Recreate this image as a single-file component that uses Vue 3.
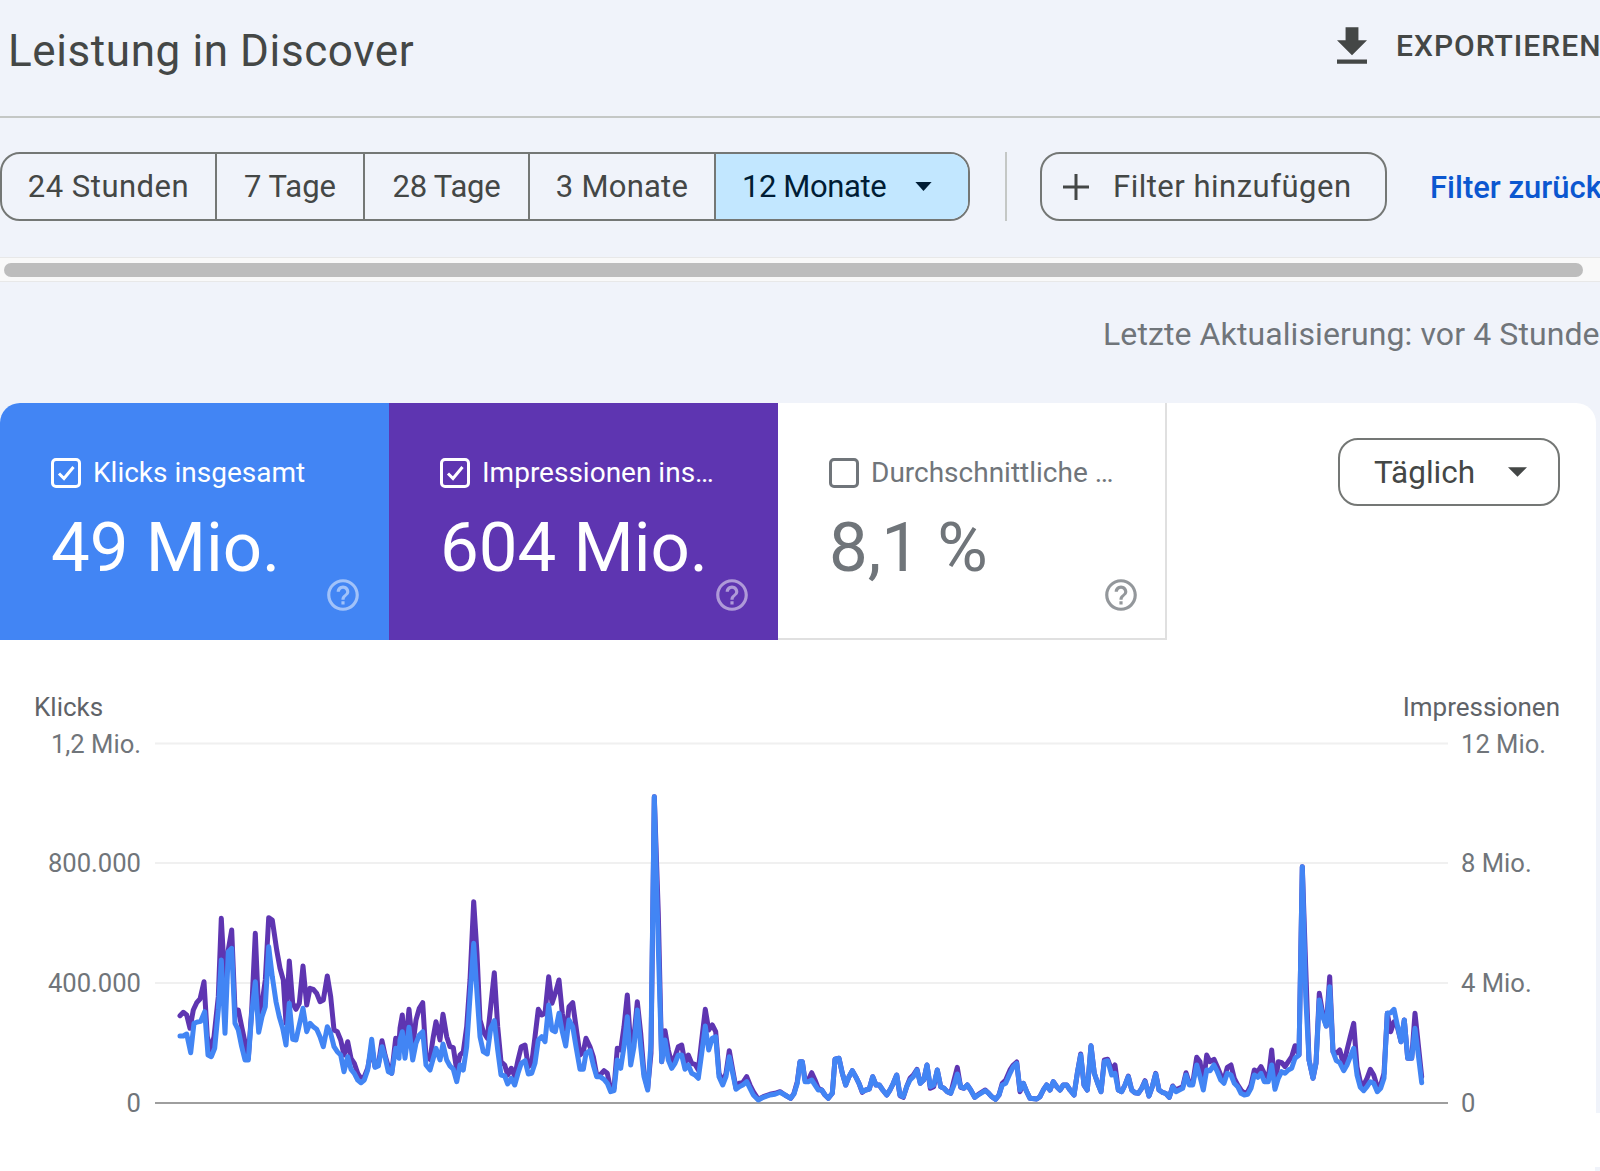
<script setup>
import { computed } from 'vue'

const toPoints = (segments) =>
  segments
    .flatMap(([offset, values]) => {
      const out = []
      for (let i = 0; i < values.length; i += 2) {
        out.push(`${(offset + values[i] / 3).toFixed(1)},${(780 + values[i + 1] / 3).toFixed(1)}`)
      }
      return out
    })
    .join(' ')

const purple = computed(() =>
  toPoints([
    [0, [540,707,550,697,560,705,570,745,580,690,590,668,600,657,612,605,622,770,632,810,642,770,655,650,664,415,675,620,685,510,695,450,705,690,715,690,725,740,740,810,745,835,755,690,766,460,776,700,786,670,796,600,806,413,817,420,830,510,840,565,850,600,858,730,868,543,878,670,888,688,898,670,909,558,920,675,930,625,940,628,950,640,960,665,970,660,982,588,992,650,1002,750,1012,755,1022,780,1032,825,1043,785,1053,835,1063,850,1073,880,1083,895,1093,890,1103,865,1115,800,1125,860,1135,855,1146,782,1155,825,1165,860,1175,880,1187,775,1197,790]],
    [400, [0,745,7,705,15,810,27,688,38,800,48,720,58,685,68,668,78,830,90,838,100,770,108,725,120,780,129,703,140,770,150,800,160,803,170,870,180,825,190,815,200,740,210,600,221,365,231,520,240,720,250,755,262,775,272,680,283,578,293,740,303,845,314,855,323,885,334,865,344,888,354,840,364,800,375,795,385,860,395,850,405,770,415,688,425,705,435,700,446,590,456,670,466,640,477,600,487,700,497,770,507,680,518,668,528,740,540,825,550,815,558,775,570,800,580,830,590,885,600,885,612,872,622,880,632,930,642,925,652,805,662,810,672,740,682,645,692,800,702,770,712,665,722,760,732,880,743,925,753,820,763,50,775,400,785,845,795,752,805,810,815,850,825,830,835,800,845,795,855,850,865,825,875,850,885,853,895,870,905,780,916,688,926,750,937,735,947,755,957,880,968,905,978,880,988,812,998,870,1008,925,1018,910,1028,908,1040,890,1050,915,1060,935,1075,958,1090,950,1110,943,1125,940,1140,935,1155,945,1172,955,1182,940,1192,905]],
    [800, [0,845,7,845,15,900,25,900,35,878,45,900,55,925,65,930,75,945,85,955,97,940,105,838,117,835,127,880,137,915,147,890,157,872,167,890,177,910,187,937,197,930,208,927,218,890,228,915,238,915,248,930,260,945,270,930,280,910,290,885,300,947,310,952,320,920,330,895,340,885,351,868,361,910,371,900,381,855,391,925,401,920,412,870,422,920,432,925,442,935,452,940,462,900,472,862,482,922,492,925,502,915,512,930,524,952,535,943,556,930,566,940,575,950,587,958,597,945,607,910,617,900,630,870,640,855,650,846,660,935,670,910,680,935,690,955,710,957,720,950,730,930,740,915,750,930,760,905,770,920,780,930,790,915,800,915,810,930,822,945,832,880,842,822,852,915,862,930,873,797,883,880,893,910,903,935,913,840,923,838,935,870,945,855,955,930,965,935,975,915,985,888,995,930,1005,938,1015,940,1025,925,1035,902,1047,948,1057,920,1067,880,1077,930,1087,937,1097,940,1108,952,1118,918,1128,930,1138,925,1148,920,1158,878,1168,910,1178,910,1190,832]],
    [1200, [0,845,10,915,20,825,30,845,42,838,52,860,62,885,72,900,82,862,93,855,103,895,113,915,123,930,133,940,143,935,153,915,163,870,173,875,183,860,193,880,205,895,215,810,225,920,235,845,245,848,255,860,265,845,275,830,285,797,297,825,307,260,317,560,327,840,339,895,348,850,358,640,368,700,379,738,389,590,399,815,409,820,419,810,431,855,441,810,451,770,461,730,471,860,481,905,491,915,501,895,511,868,521,885,532,920,542,915,552,880,562,700,572,755,582,725,592,740,603,785,613,720,623,835,635,835,645,700,665,890]]
  ])
)

const blue = computed(() =>
  toPoints([
    [0, [540,768,550,768,560,762,572,818,582,730,592,726,602,724,614,695,624,825,634,830,644,805,655,690,664,540,675,760,685,515,695,505,705,730,715,750,725,800,735,840,745,840,755,700,766,605,776,757,786,710,796,680,806,500,817,590,828,665,838,710,848,745,858,795,868,670,878,778,888,780,898,735,909,685,920,755,930,730,940,740,950,748,960,770,970,800,982,740,992,760,1002,800,1012,815,1022,825,1032,875,1043,830,1053,868,1063,880,1073,900,1083,908,1093,900,1103,870,1115,778,1125,862,1135,858,1146,800,1155,830,1165,875,1175,880,1187,805,1197,835]],
    [400, [0,780,7,755,15,835,27,742,38,840,48,790,58,765,68,755,78,855,90,870,100,835,108,805,120,840,129,792,140,840,150,858,160,868,170,905,180,855,190,870,200,800,210,650,221,490,231,640,240,770,250,815,262,822,272,745,283,722,293,810,303,885,314,888,323,912,334,895,344,915,354,880,364,850,375,842,385,882,395,880,405,850,415,780,425,770,435,785,446,675,456,750,466,755,477,700,487,755,497,798,507,720,518,740,528,800,540,868,550,868,558,820,570,812,580,855,590,890,600,890,612,898,622,910,632,935,642,932,652,840,662,865,672,800,682,710,692,855,702,800,712,690,722,800,732,890,743,930,753,790,763,50,775,500,785,845,795,780,805,840,815,865,825,850,835,825,845,825,855,868,865,855,875,880,885,885,895,895,905,820,916,738,926,810,937,775,947,770,957,890,968,915,978,890,988,830,998,880,1008,928,1018,920,1028,915,1040,905,1050,925,1060,945,1075,960,1090,952,1110,945,1125,943,1140,937,1155,945,1172,955,1182,942,1192,910]],
    [800, [0,845,7,845,15,905,25,905,35,900,45,915,55,930,65,930,75,945,85,955,97,940,105,838,117,835,127,880,137,915,147,890,157,872,167,890,177,910,187,935,197,930,208,927,218,890,228,915,238,915,248,930,260,945,270,930,280,910,290,885,300,945,310,950,320,920,330,900,340,890,351,870,361,910,371,900,381,855,391,920,401,915,412,870,422,920,432,925,442,935,452,940,462,915,472,882,482,920,492,925,502,915,512,930,524,952,535,945,556,932,566,940,575,950,587,958,597,945,607,915,617,910,630,880,640,860,650,850,660,930,670,910,680,935,690,955,710,957,720,950,730,930,740,915,750,930,760,905,770,920,780,930,790,915,800,915,810,930,822,945,832,880,842,825,852,915,862,930,873,797,883,880,893,910,903,935,913,845,923,842,935,885,945,880,955,930,965,935,975,915,985,890,995,930,1005,938,1015,940,1025,925,1035,905,1047,948,1057,920,1067,882,1077,930,1087,937,1097,940,1108,952,1118,920,1128,935,1138,930,1148,925,1158,885,1168,915,1178,915,1190,855]],
    [1200, [0,890,10,930,20,870,30,872,42,855,52,875,62,900,72,910,82,880,93,885,103,910,113,920,123,940,133,945,143,943,153,925,163,885,173,892,183,880,193,905,205,905,215,855,225,928,235,895,245,875,255,880,265,870,275,865,285,835,297,825,307,260,317,650,327,840,339,895,348,850,358,660,368,710,379,738,389,620,399,815,409,842,419,848,431,872,441,855,451,830,461,805,471,885,481,922,491,932,501,920,511,905,521,910,532,935,542,925,552,895,562,700,572,698,582,688,592,735,603,785,613,720,623,835,635,835,645,745,665,908]]
  ])
)

const ranges = ['24 Stunden', '7 Tage', '28 Tage', '3 Monate']
const helpPath =
  'M11 18h2v-2h-2v2zm1-16C6.48 2 2 6.48 2 12s4.48 10 10 10 10-4.48 10-10S17.52 2 12 2zm0 18c-4.41 0-8-3.59-8-8s3.59-8 8-8 8 3.59 8 8-3.59 8-8 8zm0-14c-2.21 0-4 1.79-4 4h2c0-1.1.9-2 2-2s2 .9 2 2c0 2-3 1.75-3 5h2c0-2.25 3-2.5 3-5 0-2.21-1.79-4-4-4z'
const tiles = [
  { cls: 'blue', label: 'Klicks insgesamt', value: '49 Mio.', checked: true },
  { cls: 'purple', label: 'Impressionen ins…', value: '604 Mio.', checked: true },
  { cls: 'plain', label: 'Durchschnittliche …', value: '8,1 %', checked: false }
]
const grid = [
  { y: 743.5, left: '1,2 Mio.', right: '12 Mio.' },
  { y: 863, left: '800.000', right: '8 Mio.' },
  { y: 983, left: '400.000', right: '4 Mio.' },
  { y: 1103, left: '0', right: '0', base: true }
]
</script>

<template>
  <div class="page">
    <header class="top">
      <h1 class="title">Leistung in Discover</h1>
      <div class="export">
        <svg class="export-icon" viewBox="5 3 14 17"><path d="M19 9h-4V3H9v6H5l7 7 7-7zM5 18v2h14v-2H5z" /></svg>
        <span class="export-label">EXPORTIEREN</span>
      </div>
    </header>

    <div class="toolbar">
      <div class="segments">
        <div v-for="r in ranges" :key="r" class="seg">{{ r }}</div>
        <div class="seg selected">
          <span>12 Monate</span>
          <svg class="seg-caret" viewBox="0 0 18 10"><path d="M0 0h18L9 10z" /></svg>
        </div>
      </div>
      <div class="sep"></div>
      <div class="add-filter">
        <svg class="plus" viewBox="0 0 26 26"><path d="M13 0v26M0 13h26" /></svg>
        <span>Filter hinzufügen</span>
      </div>
      <span class="reset">Filter zurücksetzen</span>
    </div>

    <div class="track"><div class="thumb"></div></div>

    <div class="updated">Letzte Aktualisierung: vor 4 Stunden</div>

    <section class="card">
      <div class="tile-row">
        <div v-for="t in tiles" :key="t.label" class="tile" :class="t.cls">
          <div class="tile-head">
            <svg class="check" viewBox="0 0 30 30">
              <rect x="1.5" y="1.5" width="27" height="27" rx="3.5" />
              <path v-if="t.checked" d="M8 15.5l5 5L22.5 9" />
            </svg>
            <span>{{ t.label }}</span>
          </div>
          <div class="tile-value">{{ t.value }}</div>
          <svg class="help" viewBox="0 0 24 24"><path :d="helpPath" /></svg>
        </div>
        <div class="interval">
          <span>Täglich</span>
          <svg class="int-caret" viewBox="0 0 20 10"><path d="M0 0h20L10 10z" /></svg>
        </div>
      </div>

      <svg class="chart" viewBox="0 640 1596 473" width="1596" height="473">
        <text x="34" y="716" class="axis-title">Klicks</text>
        <text x="1560" y="716" text-anchor="end" class="axis-title">Impressionen</text>
        <g v-for="g in grid" :key="g.y">
          <line x1="155" x2="1448" :y1="g.y" :y2="g.y" :class="g.base ? 'base' : 'gridline'" />
          <text x="141" :y="g.y + 9" text-anchor="end" class="tick">{{ g.left }}</text>
          <text x="1461" :y="g.y + 9" class="tick">{{ g.right }}</text>
        </g>
        <polyline :points="purple" class="line line-purple" />
        <polyline :points="blue" class="line line-blue" />
      </svg>
    </section>
    <div class="foot"></div>
    <div class="foot-end"></div>
  </div>
</template>

<style>
html, body { margin: 0; padding: 0; overflow: hidden; background: #fff; }
</style>

<style scoped>
.page {
  width: 1600px;
  height: 1171px;
  overflow: hidden;
  background: #f0f3fa;
  font-family: Roboto, "Noto Sans", sans-serif;
  color: #444746;
}
.top {
  height: 118px;
  box-sizing: border-box;
  border-bottom: 2px solid #c4c7c5;
  display: grid;
  grid-template-columns: 1337px auto;
  align-items: start;
}
.title {
  margin: 0;
  padding: 26px 0 0 8px;
  font-size: 44px;
  line-height: 50px;
  letter-spacing: 0.6px;
  font-weight: 400;
  color: #444746;
  white-space: nowrap;
}
.export {
  display: flex;
  align-items: center;
  padding-top: 27px;
  gap: 29px;
  line-height: 37px;
  white-space: nowrap;
}
.export-label {
  font-size: 30px;
  font-weight: 500;
  letter-spacing: 1px;
}
.export-icon { width: 30px; height: 37px; fill: #444746; flex: none; }
.toolbar {
  height: 139px;
  box-sizing: border-box;
  padding-top: 34px;
  display: flex;
  align-items: flex-start;
  white-space: nowrap;
  overflow: hidden;
  font-size: 31px;
  letter-spacing: 0.5px;
}
.segments {
  display: flex;
  width: 970px;
  height: 69px;
  flex: none;
  box-sizing: border-box;
  border: 2px solid #747775;
  border-radius: 20px;
  overflow: hidden;
}
.seg {
  display: flex;
  align-items: center;
  justify-content: center;
  box-sizing: border-box;
  border-right: 2px solid #747775;
}
.seg:nth-child(1) { width: 215px; }
.seg:nth-child(2) { width: 148px; letter-spacing: 0; }
.seg:nth-child(3) { width: 165px; letter-spacing: -0.2px; }
.seg:nth-child(4) { width: 186px; letter-spacing: 0.25px; }
.selected {
  flex: 1;
  border-right: none;
  justify-content: flex-start;
  padding-left: 26px;
  background: #c2e7ff;
  color: #001d35;
  letter-spacing: -0.4px;
}
.seg-caret { width: 17px; height: 9px; margin-left: 29px; fill: #001d35; }
.sep { width: 2px; height: 69px; margin-left: 35px; background: #c4c7c5; flex: none; }
.add-filter {
  margin-left: 33px;
  width: 347px;
  height: 69px;
  flex: none;
  box-sizing: border-box;
  border: 2px solid #747775;
  border-radius: 20px;
  display: flex;
  align-items: center;
  padding-left: 21px;
  gap: 24px;
}
.plus { width: 26px; height: 26px; fill: none; stroke: #444746; stroke-width: 3; flex: none; }
.reset { margin-left: 43px; line-height: 71px; color: #0b57d0; font-weight: 500; letter-spacing: 0; }
.track {
  height: 25px;
  box-sizing: border-box;
  background: #f9f9f9;
  border-top: 1px solid #e8e8e8;
  border-bottom: 1px solid #e8e8e8;
  padding: 5px 17px 5px 4px;
}
.thumb { height: 14px; border-radius: 7px; background: #bdbdbd; }
.updated {
  height: 121px;
  box-sizing: border-box;
  padding: 32px 0 0 1103px;
  font-size: 32px;
  line-height: 40px;
  letter-spacing: 0.1px;
  color: #70757a;
  white-space: nowrap;
}
.card {
  width: 1596px;
  height: 710px;
  background: #fff;
  border-radius: 20px 20px 0 0;
}
.tile-row { display: flex; height: 237px; }
.tile {
  width: 389px;
  box-sizing: border-box;
  position: relative;
  padding: 55px 0 0 51px;
  color: #fff;
}
.blue { background: #4285f4; border-top-left-radius: 20px; }
.purple { background: #5e35b1; }
.plain { color: #70757a; border-right: 2px solid #e0e0e0; border-bottom: 2px solid #e0e0e0; }
.tile-head {
  display: flex;
  align-items: center;
  gap: 12px;
  font-size: 28px;
  line-height: 30px;
  white-space: nowrap;
}
.check { width: 30px; height: 30px; fill: none; stroke: currentColor; stroke-width: 3; flex: none; }
.tile-value {
  margin-top: 19px;
  font-size: 69px;
  line-height: 82px;
  white-space: nowrap;
}
.help { position: absolute; left: 324px; top: 172.5px; width: 38px; height: 38px; fill: currentColor; opacity: 0.5; }
.plain .help { opacity: 0.75; }
.interval {
  margin: 35px 36px 0 auto;
  width: 222px;
  height: 68px;
  box-sizing: border-box;
  border: 2px solid #747775;
  border-radius: 20px;
  display: flex;
  align-items: center;
  padding-left: 34px;
  font-size: 31.5px;
}
.int-caret { width: 19px; height: 10px; margin-left: 33px; fill: #444746; }
.chart { display: block; overflow: visible; }
.axis-title { font-size: 26px; fill: #5f6368; }
.tick { font-size: 25.6px; fill: #70757a; }
.gridline { stroke: #f0f0f0; stroke-width: 2; }
.base { stroke: #9e9e9e; stroke-width: 2; }
.line { fill: none; stroke-width: 5; stroke-linejoin: round; stroke-linecap: round; }
.line-purple { stroke: #5e35b1; }
.line-blue { stroke: #4285f4; }
.foot { height: 54px; background: #fff; }
.foot-end { width: 1595px; height: 4px; background: #fff; }
</style>
